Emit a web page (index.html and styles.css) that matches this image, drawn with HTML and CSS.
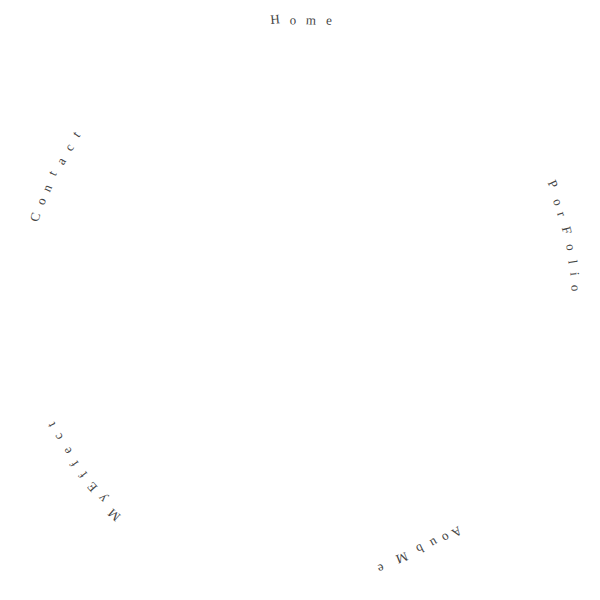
FILE: index.html
```html
<!DOCTYPE html>
<html>
  <head>
    <meta charset="UTF-8">
    <title>Circle Menu</title>
    <link rel="stylesheet" href="styles.css">
  </head>
  <body>
    <nav class="ring" id="ring"></nav>

    <script>
      // each letter: glyph, centre x, centre y (px on the 600x600 canvas)
      var menu = [
        { href: "#home", chars: [["H", 274.5, 19], ["o", 293, 19.5], ["m", 311, 19.5], ["e", 329, 20]] },
        { href: "#portfolio", chars: [["P", 553.3, 184], ["o", 558.3, 201.7], ["r", 561.7, 214.3], ["F", 567.3, 230], ["o", 570.7, 247.3], ["l", 573.3, 261.7], ["i", 575, 274], ["o", 576, 288.3]] },
        { href: "#about", chars: [["A", 457.3, 531.7], ["o", 446, 538.3], ["u", 434, 543.3], ["b", 420, 549.3], ["M", 402.3, 558.3], ["e", 380.7, 569.3]] },
        { href: "#effect", chars: [["M", 114, 515], ["y", 102, 499.3], ["E", 91.7, 487.3], ["f", 83.3, 475], ["f", 74, 464], ["e", 67, 450.7], ["c", 58, 437.3], ["t", 51, 425]] },
        { href: "#contact", chars: [["C", 35, 217.3], ["o", 40.7, 200.7], ["n", 47.3, 188.3], ["t", 51.7, 173.3], ["a", 60.7, 160.7], ["c", 69.3, 147.3], ["t", 76, 134]] }
      ];

      var ring = document.getElementById("ring");
      var cx = 300, cy = 300;

      menu.forEach(function(item) {
        var link = document.createElement("a");
        link.className = "ring-link";
        link.href = item.href;
        item.chars.forEach(function(c) {
          var span = document.createElement("span");
          var angle = Math.atan2(c[1] - cx, cy - c[2]) * 180 / Math.PI;
          span.className = "ring-char";
          span.textContent = c[0];
          span.style.left = c[1] + "px";
          span.style.top = c[2] + "px";
          span.style.transform = "translate(-50%, -50%) rotate(" + angle.toFixed(2) + "deg)";
          link.appendChild(span);
        });
        ring.appendChild(link);
      });
    </script>
  </body>
</html>
```

FILE: styles.css
```css
body {
  margin: 0;
  background-color: #fff;
  font-family: "Liberation Serif", "Times New Roman", serif;
}

.ring {
  position: relative;
  width: 600px;
  height: 600px;
}

.ring-link {
  color: #444;
  text-decoration: none;
}

.ring-char {
  position: absolute;
  font-size: 13px;
  line-height: 1;
}
```
